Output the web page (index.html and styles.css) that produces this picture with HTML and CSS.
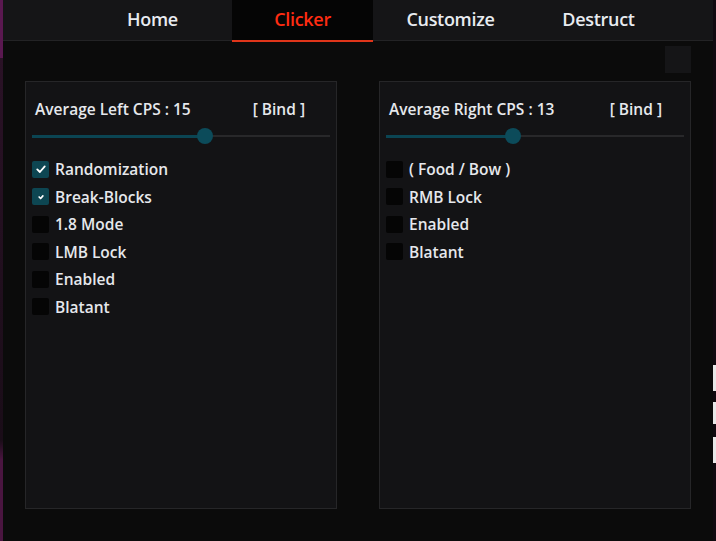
FILE: index.html
```html
<!DOCTYPE html>
<html>
<head>
<meta charset="utf-8">
<link rel="stylesheet" href="styles.css">
</head>
<body>
<div class="window">
  <div class="edge-left"></div>
  <div class="app">
    <nav class="tabs">
      <div class="tab">Home</div>
      <div class="tab active">Clicker</div>
      <div class="tab">Customize</div>
      <div class="tab">Destruct</div>
    </nav>
    <main class="main">
      <div class="toolbar"><div class="square"></div></div>
      <div class="panels">
        <section class="panel">
          <div class="panel-head">
            <span class="title">Average Left CPS : 15</span>
            <span class="bind bind-left">[ Bind ]</span>
          </div>
          <div class="slider">
            <div class="fill" style="width:58%"></div>
            <div class="knob"></div>
            <div class="rest"></div>
          </div>
          <ul class="options">
            <li><span class="box on"><svg viewBox="0 0 16 16" width="12" height="12"><path d="M3 8.5 L6.5 12 L13 4.5" fill="none" stroke="#fff" stroke-width="2.4" stroke-linecap="round" stroke-linejoin="round"/></svg></span>Randomization</li>
            <li><span class="box on"><svg viewBox="0 0 16 16" width="12" height="12"><path d="M5.5 8 L7.5 10 L10.5 6.5" fill="none" stroke="#fff" stroke-width="2.2" stroke-linecap="round" stroke-linejoin="round"/></svg></span>Break-Blocks</li>
            <li><span class="box"></span>1.8 Mode</li>
            <li><span class="box"></span>LMB Lock</li>
            <li><span class="box"></span>Enabled</li>
            <li><span class="box"></span>Blatant</li>
          </ul>
        </section>
        <section class="panel">
          <div class="panel-head">
            <span class="title">Average Right CPS : 13</span>
            <span class="bind bind-right">[ Bind ]</span>
          </div>
          <div class="slider">
            <div class="fill" style="width:42.5%"></div>
            <div class="knob"></div>
            <div class="rest"></div>
          </div>
          <ul class="options">
            <li><span class="box"></span>( Food / Bow )</li>
            <li><span class="box"></span>RMB Lock</li>
            <li><span class="box"></span>Enabled</li>
            <li><span class="box"></span>Blatant</li>
          </ul>
        </section>
      </div>
    </main>
  </div>
  <div class="edge-right"><span class="seg1"></span><span class="seg2"></span><span class="seg3"></span></div>
</div>
</body>
</html>
```
FILE: styles.css
```css
html, body {
  margin: 0;
  padding: 0;
  background: #0b0b0b;
}
body {
  width: 716px;
  height: 541px;
  overflow: hidden;
  font-family: "Open Sans", "Noto Sans", sans-serif;
  color: #e6e8ec;
}
.window {
  display: flex;
  height: 541px;
}
.edge-left {
  width: 3px;
  background: linear-gradient(#5a1850 0, #5a1850 58px, #2a1226 58px, #1a0d18 440px, #4a1540 460px, #4a1540 100%);
  flex: none;
}
.edge-right {
  width: 3px;
  flex: none;
  display: flex;
  flex-direction: column;
  padding-top: 365px;
  box-sizing: border-box;
  background: #100a10;
}
.edge-right span {
  background: #e8e8e8;
}
.seg1 { height: 26px; }
.seg2 { height: 22px; margin-top: 11px; }
.seg3 { height: 26px; margin-top: 13px; }
.app {
  flex: 1;
  display: flex;
  flex-direction: column;
}
.tabs {
  height: 40px;
  background: #151517;
  border-bottom: 1px solid #232325;
  display: flex;
  gap: 7px;
  padding-left: 81px;
}
.tab {
  width: 141px;
  display: flex;
  align-items: center;
  justify-content: center;
  font-size: 18px;
  font-weight: 600;
  color: #e8ebf0;
  letter-spacing: -0.3px;
  box-sizing: border-box;
  padding-bottom: 2px;
}
.tab:first-child {
  padding-right: 4px;
}
.tab.active {
  background: #050505;
  color: #ff2c12;
  border-bottom: 2px solid #e0351a;
  height: 42px;
  padding-bottom: 2px;
}
.main {
  flex: 1;
  padding: 5px 22px 0 22px;
  display: flex;
  flex-direction: column;
}
.toolbar {
  display: flex;
  justify-content: flex-end;
  height: 27px;
  margin-bottom: 8px;
}
.square {
  width: 26px;
  height: 27px;
  background: #151517;
}
.panels {
  display: flex;
  gap: 42px;
}
.panel {
  width: 312px;
  height: 428px;
  box-sizing: border-box;
  border: 1px solid #262628;
  background: #131315;
  display: flex;
  flex-direction: column;
}
.panel-head {
  display: flex;
  justify-content: space-between;
  padding: 17px 0 0 9px;
  line-height: 21px;
  font-size: 15.5px;
  font-weight: 600;
}
.bind-left { margin-right: 31px; }
.bind-right { margin-right: 28px; }
.slider {
  margin: 8px 6px 0 6px;
  height: 16px;
  display: flex;
  align-items: center;
}
.fill {
  height: 3px;
  background: #0b4553;
}
.knob {
  width: 16px;
  height: 16px;
  border-radius: 50%;
  background: #0c4b5a;
  margin: 0 -8px;
  position: relative;
  z-index: 1;
  flex: none;
}
.rest {
  flex: 1;
  height: 2px;
  background: #28282a;
}
.options {
  list-style: none;
  margin: 16.5px 0 0 6px;
  padding: 0;
  display: flex;
  flex-direction: column;
  gap: 10.6px;
}
.options li {
  display: flex;
  align-items: center;
  gap: 6px;
  height: 17px;
  font-size: 15.5px;
  font-weight: 600;
  color: #e6e8ec;
}
.box {
  width: 17px;
  height: 17px;
  border-radius: 2px;
  background: #050505;
  display: flex;
  align-items: center;
  justify-content: center;
  flex: none;
}
.box.on {
  background: #0d4652;
}
```
